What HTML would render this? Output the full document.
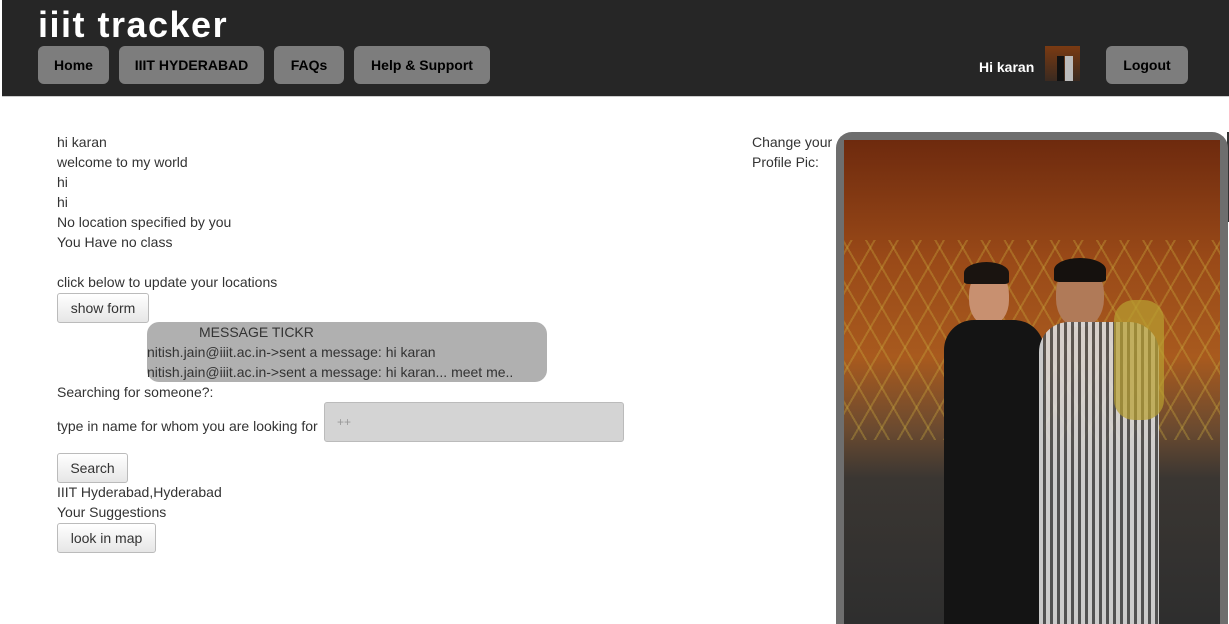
<!DOCTYPE html>
<html><head><meta charset="utf-8"><style>
html,body{margin:0;width:1229px;height:624px;overflow:hidden}
body{background:#fff;font-family:"Liberation Sans",sans-serif;position:relative}
.hdr{position:absolute;left:2px;top:0;width:1227px;height:96px;background:#262626;border-bottom:1px solid #ccc}
.title{position:absolute;left:38px;top:4px;color:#fff;font-size:36px;font-weight:bold;letter-spacing:1.5px}
.nb{position:absolute;top:46px;height:38px;background:#7d7d7d;border-radius:6px;color:#000;font-weight:bold;font-size:14px;line-height:38px;text-align:center}
.t{position:absolute;left:57px;font-size:14px;color:#333;line-height:20px}
.btn{position:absolute;left:57px;height:28px;border:1px solid #bbb;border-radius:3px;background:linear-gradient(#fff,#e6e6e6);font-size:14px;color:#333;line-height:28px;text-align:center}
</style></head><body>
<div class="hdr"></div>
<div class="title">iiit tracker</div>
<div class="nb" style="left:38px;width:71px">Home</div>
<div class="nb" style="left:119px;width:145px">IIIT HYDERABAD</div>
<div class="nb" style="left:274px;width:70px">FAQs</div>
<div class="nb" style="left:354px;width:136px">Help &amp; Support</div>
<div style="position:absolute;left:979px;top:59px;color:#fff;font-weight:bold;font-size:14px">Hi karan</div>
<div style="position:absolute;left:1045px;top:46px;width:35px;height:35px;background:linear-gradient(#7a3a12,#3a2a20)"><div style="position:absolute;left:12px;top:10px;width:7px;height:25px;background:#111"></div><div style="position:absolute;left:20px;top:10px;width:8px;height:25px;background:#bbb"></div></div>
<div class="nb" style="left:1106px;width:82px;top:46px;height:38px">Logout</div>
<div style="position:absolute;left:1227px;top:132px;width:2px;height:90px;background:#333"></div>

<div class="t" style="top:132px">hi karan<br>welcome to my world<br>hi<br>hi<br>No location specified by you<br>You Have no class<br><br>click below to update your locations</div>
<div class="btn" style="top:293px;width:90px">show form</div>
<div style="position:absolute;left:147px;top:322px;width:400px;height:60px;background:#b0b0b0;border-radius:12px"></div>
<div class="t" style="left:199px;top:322px">MESSAGE TICKR</div>
<div class="t" style="left:147px;top:342px">nitish.jain@iiit.ac.in-&gt;sent a message: hi karan<br>nitish.jain@iiit.ac.in-&gt;sent a message: hi karan... meet me..</div>
<div class="t" style="top:382px">Searching for someone?:</div>
<div class="t" style="top:416px">type in name for whom you are looking for</div>
<div style="position:absolute;left:324px;top:402px;width:298px;height:38px;background:#d4d4d4;border:1px solid #bbb;border-radius:3px;color:#999;font-size:12px;line-height:38px;text-indent:12px">++</div>
<div class="btn" style="top:453px;width:69px">Search</div>
<div class="t" style="top:482px">IIIT Hyderabad,Hyderabad<br>Your Suggestions</div>
<div class="btn" style="top:523px;width:97px">look in map</div>

<div class="t" style="left:752px;top:132px">Change your<br>Profile Pic:</div>
<div style="position:absolute;left:836px;top:132px;width:392px;height:492px;background:#6e6e6e;border-radius:16px 16px 0 0"></div>
<div style="position:absolute;left:844px;top:140px;width:376px;height:484px;overflow:hidden;background:linear-gradient(#6e2a0e 0%,#9a4a18 25%,#a85a1e 45%,#6a4a30 60%,#3a3632 70%,#2e2e2e 100%)">
<div style="position:absolute;left:0;top:100px;width:376px;height:200px;background:repeating-linear-gradient(60deg,transparent 0 18px,rgba(200,170,60,.35) 18px 20px),repeating-linear-gradient(-60deg,transparent 0 18px,rgba(200,170,60,.35) 18px 20px)"></div>
<div style="position:absolute;left:125px;top:130px;width:40px;height:55px;border-radius:45%;background:#c89070"></div>
<div style="position:absolute;left:120px;top:122px;width:45px;height:22px;border-radius:50% 50% 10% 10%;background:#1a1410"></div>
<div style="position:absolute;left:100px;top:180px;width:100px;height:304px;background:#141414;border-radius:30px 30px 0 0"></div>
<div style="position:absolute;left:212px;top:125px;width:48px;height:62px;border-radius:45%;background:#b07a58"></div>
<div style="position:absolute;left:210px;top:118px;width:52px;height:24px;border-radius:50% 50% 10% 10%;background:#15110e"></div>
<div style="position:absolute;left:195px;top:182px;width:120px;height:302px;border-radius:30px 30px 0 0;background:repeating-linear-gradient(90deg,#ddd 0 4px,#555 4px 7px),#999;opacity:.9"></div>
<div style="position:absolute;left:270px;top:160px;width:50px;height:120px;background:#b8a030;opacity:.7;border-radius:20px"></div>
</div>
</body></html>
